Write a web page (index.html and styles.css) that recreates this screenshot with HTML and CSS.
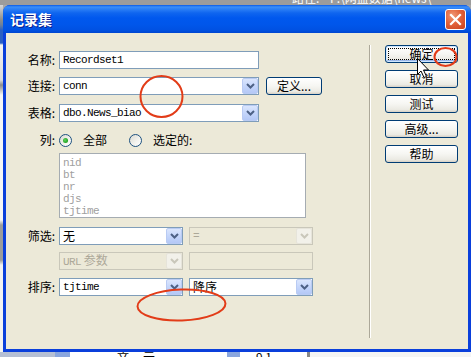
FILE: index.html
```html
<!DOCTYPE html>
<html>
<head>
<meta charset="utf-8">
<link rel="stylesheet" href="styles.css">
</head>
<body>
<div class="desktop">
  <div class="topstrip"><span>路径:&nbsp;&nbsp;&nbsp; F:\网盘数据\news\</span></div>
  <div class="middle">
    <div class="leftstrip"></div>
    <div class="window">
      <div class="titlebar">
        <span class="title">记录集</span>
        <span class="close">
          <svg width="13" height="13" viewBox="0 0 13 13"><path d="M2 2 L11 11 M11 2 L2 11" stroke="#fff" stroke-width="2.2" stroke-linecap="square"/></svg>
        </span>
      </div>
      <div class="client">
        <div class="form">
          <div class="row r1">
            <span class="label">名称:</span>
            <div class="input wide"><span class="val mono">Recordset1</span></div>
          </div>
          <div class="row r2">
            <span class="label">连接:</span>
            <div class="select wide"><span class="val mono">conn</span><span class="arrow"><svg width="9" height="6" viewBox="0 0 9 6"><path d="M1 1 L4.5 4.5 L8 1" fill="none" stroke="#4d6185" stroke-width="2"/></svg></span></div>
            <span class="btn define">定义...</span>
          </div>
          <div class="row r3">
            <span class="label">表格:</span>
            <div class="select wide"><span class="val mono">dbo.News_biao</span><span class="arrow"><svg width="9" height="6" viewBox="0 0 9 6"><path d="M1 1 L4.5 4.5 L8 1" fill="none" stroke="#4d6185" stroke-width="2"/></svg></span></div>
          </div>
          <div class="row r4">
            <span class="label">列:</span>
            <span class="radio checked"></span><span class="rtext first">全部</span>
            <span class="radio"></span><span class="rtext">选定的:</span>
          </div>
          <div class="row r5">
            <span class="label"></span>
            <div class="listbox mono">
              <div>nid</div>
              <div>bt</div>
              <div>nr</div>
              <div>djs</div>
              <div>tjtime</div>
            </div>
          </div>
          <div class="row r6">
            <span class="label">筛选:</span>
            <div class="select half"><span class="val">无</span><span class="arrow"><svg width="9" height="6" viewBox="0 0 9 6"><path d="M1 1 L4.5 4.5 L8 1" fill="none" stroke="#4d6185" stroke-width="2"/></svg></span></div>
            <div class="select half disabled gap"><span class="val mono">=</span><span class="arrow"><svg width="9" height="6" viewBox="0 0 9 6"><path d="M1 1 L4.5 4.5 L8 1" fill="none" stroke="#c9c7ba" stroke-width="2"/></svg></span></div>
          </div>
          <div class="row r7">
            <span class="label"></span>
            <div class="select half disabled"><span class="val"><span class="mono">URL</span> 参数</span><span class="arrow"><svg width="9" height="6" viewBox="0 0 9 6"><path d="M1 1 L4.5 4.5 L8 1" fill="none" stroke="#c9c7ba" stroke-width="2"/></svg></span></div>
            <div class="input half disabled gap"></div>
          </div>
          <div class="row r8">
            <span class="label">排序:</span>
            <div class="select half"><span class="val mono">tjtime</span><span class="arrow"><svg width="9" height="6" viewBox="0 0 9 6"><path d="M1 1 L4.5 4.5 L8 1" fill="none" stroke="#4d6185" stroke-width="2"/></svg></span></div>
            <div class="select half gap"><span class="val">降序</span><span class="arrow"><svg width="9" height="6" viewBox="0 0 9 6"><path d="M1 1 L4.5 4.5 L8 1" fill="none" stroke="#4d6185" stroke-width="2"/></svg></span></div>
          </div>
        </div>
        <div class="sep"></div>
        <div class="buttons">
          <span class="btn side default">确定</span>
          <span class="btn side">取消</span>
          <span class="btn side">测试</span>
          <span class="btn side">高级...</span>
          <span class="btn side">帮助</span>
        </div>
      </div>
    </div>
  </div>
  <div class="bottomstrip">
    <span class="b1"></span><span class="b2"></span><span class="b3">文</span><span class="b4">元</span><span class="b5"></span><span class="b6">9 1</span><span class="b7"></span>
  </div>
  <svg class="annot" width="471" height="357" viewBox="0 0 471 357">
    <ellipse cx="161.5" cy="96.5" rx="21" ry="20.5" fill="none" stroke="#e23c18" stroke-width="2"/>
    <ellipse cx="445.5" cy="57" rx="11" ry="9" fill="none" stroke="#e23c18" stroke-width="2"/>
    <ellipse cx="181.5" cy="305" rx="44" ry="15.5" fill="none" stroke="#e23c18" stroke-width="2" transform="rotate(-2 181.5 305)"/>
    <path d="M417.5 58.5 V74.5 L421 71 L424 77.5 L426.5 76.5 L423.5 70 H428.5 Z" fill="#fff" stroke="#000" stroke-width="1" stroke-linejoin="miter"/>
  </svg>
</div>
</body>
</html>
```

FILE: styles.css
```css
* { box-sizing: border-box; }
html, body { margin: 0; padding: 0; }
body {
  width: 471px;
  height: 357px;
  overflow: hidden;
  font-family: "Noto Sans CJK SC", "Noto Sans", sans-serif;
  font-size: 12px;
  color: #000;
}
.desktop {
  position: relative;
  width: 471px;
  height: 357px;
  display: flex;
  flex-direction: column;
  overflow: hidden;
  background: #a8a8a8;
}
.topstrip {
  height: 5px;
  overflow: hidden;
  background: #9c9c9c;
}
.topstrip span {
  display: block;
  margin-left: 292px;
  margin-top: -8px;
  line-height: 12px;
  color: #fff;
  white-space: nowrap;
}
.middle {
  display: flex;
  height: 347px;
}
.leftstrip {
  width: 3px;
  background: linear-gradient(to bottom, #d8d8d8 0, #8c8c8c 15px, #6b7f9c 20px, #2a5fc4 25px, #2a5fc4 38px, #f2f2f2 40px, #dcdcdc 75px, #8c8c8c 80px, #f6f6f6 90px, #f6f6f6 215px, #9c9c9c 220px, #9c9c9c 255px, #f2f2f2 260px, #f2f2f2 347px);
}
.window {
  width: 468px;
  height: 347px;
  display: flex;
  flex-direction: column;
  border-radius: 7px 7px 0 0;
  overflow: hidden;
  background: #0a3fdb;
}
.titlebar {
  height: 28px;
  flex: none;
  display: flex;
  align-items: center;
  justify-content: space-between;
  padding: 0 5px 0 7px;
  background: linear-gradient(to bottom, #0a5ae6 0, #3b8ff9 2px, #2c80f6 4px, #0f65ef 8px, #0058ee 13px, #0056ea 20px, #0051e2 25px, #0046d0 28px);
}
.title {
  color: #fff;
  font-weight: bold;
  font-size: 14px;
  line-height: 18px;
  text-shadow: 1px 1px 0 #0a1c8c;
}
.close {
  width: 21px;
  height: 21px;
  margin-top: 1px;
  border: 1px solid #fff;
  border-radius: 3px;
  background: radial-gradient(circle at 35% 30%, #f09a78 0, #e2623b 45%, #c8401c 100%);
  display: flex;
  align-items: center;
  justify-content: center;
}
.client {
  flex: 1;
  display: flex;
  margin: 0 3px 3px 3px;
  background: #ece9d8;
}
.form {
  width: 363px;
  display: flex;
  flex-direction: column;
  padding-top: 18px;
}
.row {
  display: flex;
  align-items: center;
}
.r1 { height: 18px; }
.r2 { height: 18px; margin-top: 8px; }
.r3 { height: 18px; margin-top: 9px; }
.r4 { height: 14px; margin-top: 11px; }
.r5 { margin-top: 6px; align-items: flex-start; }
.r6 { height: 18px; margin-top: 9px; }
.r7 { height: 18px; margin-top: 7px; }
.r8 { height: 18px; margin-top: 8px; }
.label {
  width: 49px;
  margin-right: 4px;
  text-align: right;
  line-height: 16px;
  white-space: nowrap;
}
.mono {
  font-family: "Liberation Mono", "DejaVu Sans Mono", monospace;
  font-size: 11px;
  letter-spacing: -0.6px;
}
.input, .select {
  height: 18px;
  border: 1px solid #7f9db9;
  background: #fff;
  display: flex;
  align-items: center;
}
.wide { width: 200px; }
.half { width: 124px; }
.gap { margin-left: 6px; }
.val {
  flex: 1;
  padding-left: 3px;
  line-height: 16px;
  white-space: nowrap;
}
.arrow {
  width: 16px;
  height: 16px;
  flex: none;
  border: 1px solid #b9cbf3;
  border-radius: 2px;
  background: linear-gradient(to bottom, #dbe6fd 0, #c5d6fb 50%, #b4c8f6 100%);
  display: flex;
  align-items: center;
  justify-content: center;
}
.disabled {
  border-color: #c9c7ba;
  background: #ece9d8;
  color: #aca899;
}
.disabled .arrow {
  border-color: #e6e4da;
  background: #f2f1ea;
}
.btn {
  height: 18px;
  border: 1px solid #003c74;
  border-radius: 3px;
  background: linear-gradient(to bottom, #ffffff 0, #f6f6f2 50%, #ebeae3 85%, #d6d0c5 100%);
  display: flex;
  align-items: center;
  justify-content: center;
  line-height: 16px;
  white-space: nowrap;
}
.define {
  width: 56px;
  margin-left: 7px;
}
.radio {
  width: 13px;
  height: 13px;
  border: 1px solid #1c5180;
  border-radius: 50%;
  background: linear-gradient(135deg, #dcdad1 0, #f3f3ef 60%, #ffffff 100%);
  display: flex;
  align-items: center;
  justify-content: center;
}
.radio.checked::after {
  content: "";
  width: 5px;
  height: 5px;
  border-radius: 50%;
  background: radial-gradient(circle at 40% 40%, #5ed35e 0, #21a121 70%);
}
.rtext {
  margin-left: 11px;
  margin-right: 22px;
  line-height: 16px;
}
.listbox {
  width: 247px;
  height: 65px;
  border: 1px solid #a5acb2;
  background: #fff;
  color: #a0a0a0;
  padding: 3px 0 0 3px;
  line-height: 12px;
}
.sep {
  width: 2px;
  height: 293px;
  margin-top: 12px;
  border-left: 1px solid #aca899;
  border-right: 1px solid #fff;
}
.buttons {
  display: flex;
  flex-direction: column;
  gap: 7px;
  padding-top: 12px;
  padding-left: 14px;
}
.side {
  width: 73px;
}
.default {
  box-shadow: inset 0 0 0 1px #cee7ff, inset 0 -1px 0 1px #9bb7e9;
  outline: 1px dotted #000;
  outline-offset: -4px;
}
.bottomstrip {
  height: 5px;
  display: flex;
  overflow: hidden;
  background: #f4f4f4;
  font-size: 12px;
  line-height: 10px;
}
.bottomstrip span { display: block; height: 5px; overflow: hidden; }
.b1 { width: 55px; background: #b5bfd4; }
.b2 { width: 15px; background: #8aa6de; }
.b3 { width: 65px; background: #fff; padding-left: 47px; }
.b4 { width: 92px; background: #fff; padding-left: 8px; }
.b5 { width: 13px; background: #8aa6de; }
.b6 { width: 67px; background: #fff; padding-left: 16px; }
.b7 { width: 3px; background: #888; }
.annot {
  position: absolute;
  left: 0;
  top: 0;
  pointer-events: none;
}
```
